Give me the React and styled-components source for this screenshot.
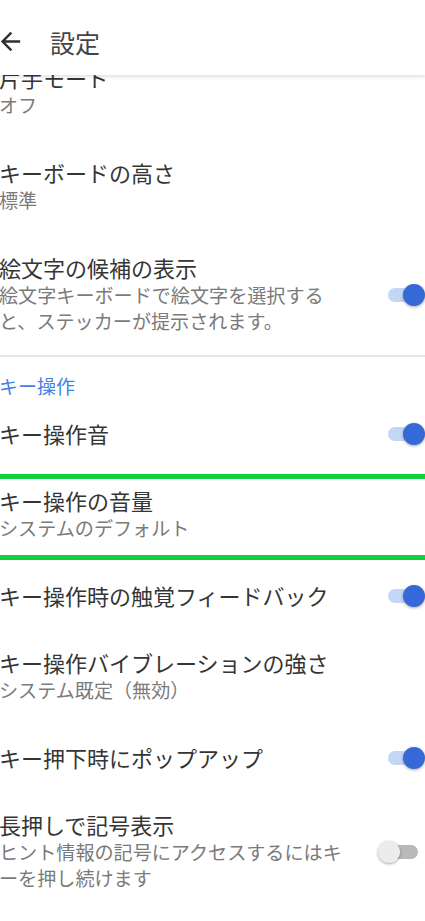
import React from "react";
import styled, { createGlobalStyle } from "styled-components";

const GlobalStyle = createGlobalStyle`
  html, body {
    margin: 0;
    padding: 0;
    background: #ffffff;
    overflow: hidden;
  }
  body {
    font-family: "Noto Sans CJK JP", "Noto Sans", sans-serif;
  }
`;

const settings = [
  { title: "片手モード", summary: "オフ" },
  { title: "キーボードの高さ", summary: "標準" },
  {
    title: "絵文字の候補の表示",
    summary: "絵文字キーボードで絵文字を選択すると、ステッカーが提示されます。",
    toggle: true,
    on: true,
  },
];

const keySettings = [
  { title: "キー操作音", toggle: true, on: true },
  { title: "キー操作の音量", summary: "システムのデフォルト", marked: true },
  { title: "キー操作時の触覚フィードバック", toggle: true, on: true },
  { title: "キー操作バイブレーションの強さ", summary: "システム既定（無効）" },
  { title: "キー押下時にポップアップ", toggle: true, on: true },
  {
    title: "長押しで記号表示",
    summary: "ヒント情報の記号にアクセスするにはキーを押し続けます",
    toggle: true,
    on: false,
  },
];

const BackArrow = () => (
  <ArrowSvg viewBox="0 0 24 24">
    <path d="M20 11H7.83l5.59-5.59L12 4l-8 8 8 8 1.41-1.41L7.83 13H20v-2z" />
  </ArrowSvg>
);

const SettingRow = ({ item }) => (
  <Row $marked={item.marked}>
    <TextBlock>
      <Title>{item.title}</Title>
      {item.summary && <Summary>{item.summary}</Summary>}
    </TextBlock>
    {item.toggle && <Switch $on={item.on} />}
  </Row>
);

const App = () => {
  return (
    <Screen>
      <GlobalStyle />
      <Toolbar>
        <BackArrow />
        <ToolbarTitle>設定</ToolbarTitle>
      </Toolbar>
      <List>
        {settings.map((item) => (
          <SettingRow key={item.title} item={item} />
        ))}
        <Divider />
        <SectionHeader>キー操作</SectionHeader>
        {keySettings.map((item) => (
          <SettingRow key={item.title} item={item} />
        ))}
      </List>
    </Screen>
  );
};

const Screen = styled.div`
  width: 425px;
  height: 921px;
  overflow: hidden;
  background: #ffffff;
`;

const Toolbar = styled.header`
  position: relative;
  z-index: 2;
  height: 75px;
  box-sizing: border-box;
  padding-top: 8px;
  display: flex;
  align-items: center;
  background: #ffffff;
  box-shadow: 0 2px 4px rgba(0, 0, 0, 0.12);
`;

const ArrowSvg = styled.svg`
  width: 29px;
  height: 29px;
  margin-left: -4px;
  fill: #303030;
  flex-shrink: 0;
`;

const ToolbarTitle = styled.h1`
  margin: 0 0 0 25px;
  font-size: 25px;
  font-weight: 400;
  line-height: 30px;
  color: #444444;
`;

const List = styled.main`
  position: relative;
  z-index: 1;
  margin-top: -31px;
`;

const Row = styled.div`
  position: relative;
  display: flex;
  align-items: center;
  padding: 20px 7px 20px 0;

  ${({ $marked }) =>
    $marked &&
    `
    &::before,
    &::after {
      content: "";
      position: absolute;
      left: 0;
      right: 0;
      height: 5px;
      background: #12cf3e;
    }
    &::before { top: 7px; }
    &::after { bottom: 2px; }
  `}
`;

const TextBlock = styled.div`
  flex: 1;
  max-width: 352px;
  margin-left: -1px;
`;

const Title = styled.div`
  font-size: 22px;
  line-height: 27px;
  color: #353535;
`;

const Summary = styled.div`
  margin-top: 1px;
  padding-bottom: 1px;
  font-size: 19.1px;
  line-height: 26px;
  color: #7a7a7a;
`;

const Switch = styled.span`
  position: relative;
  flex-shrink: 0;
  margin-left: auto;
  width: 30px;
  height: 14px;
  border-radius: 7px;
  background: ${({ $on }) => ($on ? "#c4d6f6" : "#b9b9b9")};

  &::after {
    content: "";
    position: absolute;
    top: -4px;
    left: ${({ $on }) => ($on ? "15px" : "-10px")};
    width: 22px;
    height: 22px;
    border-radius: 50%;
    background: ${({ $on }) => ($on ? "#3569d8" : "#ececec")};
    box-shadow: 0 1px 3px rgba(0, 0, 0, 0.35);
  }
`;

const Divider = styled.div`
  height: 2px;
  background: #e6e6e6;
`;

const SectionHeader = styled.div`
  padding: 18px 0 3px;
  margin-left: -1px;
  font-size: 19px;
  line-height: 22px;
  color: #4281e8;
`;

export default App;
